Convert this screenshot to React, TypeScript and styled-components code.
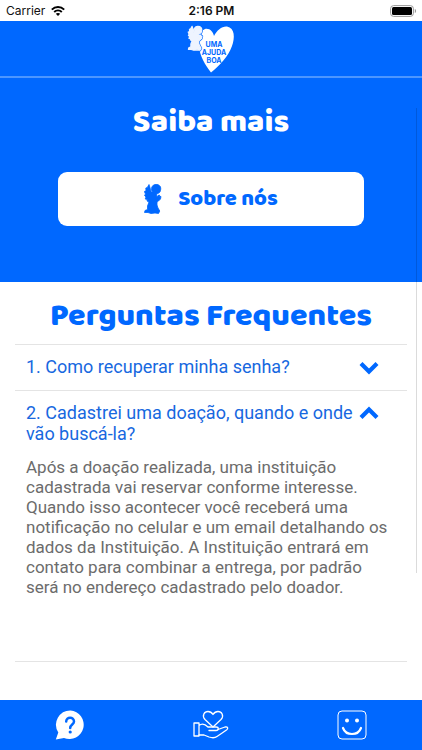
import React, { useState } from "react";
import styled, { createGlobalStyle } from "styled-components";

const BLUE = "#0068ff";

const GlobalStyle = createGlobalStyle`
  *, *::before, *::after { box-sizing: border-box; }
  body { margin: 0; background: #fff; font-family: Roboto, sans-serif; }
  button { font: inherit; color: inherit; background: none; border: 0; padding: 0; cursor: pointer; }
  h1, h2, h3, p { margin: 0; }
`;

const Screen = styled.div`
  display: flex;
  flex-direction: column;
  height: 100vh;
  background: #fff;
`;

const StatusBar = styled.div`
  display: grid;
  grid-template-columns: 1fr auto 1fr;
  align-items: center;
  flex: none;
  height: 21px;
  padding: 1px 5px 0 6px;
  font: 400 12px/20px Inter, sans-serif;
  color: #111;
`;

const Carrier = styled.span`
  display: flex;
  align-items: center;
  gap: 6px;
`;

const Clock = styled.span`
  font-weight: 600;
`;

const BatterySlot = styled.span`
  display: flex;
  justify-content: flex-end;
`;

const Header = styled.header`
  display: flex;
  justify-content: center;
  flex: none;
  height: 57px;
  padding-top: 4px;
  background: ${BLUE};
  border-bottom: 2px solid #4c96ff;
`;

const Body = styled.main`
  position: relative;
  flex: 1;
  min-height: 0;
`;

const ScrollThumb = styled.div`
  position: absolute;
  top: 30px;
  right: 5px;
  bottom: 127px;
  width: 1px;
  background: rgba(0, 0, 0, 0.14);
`;

const Hero = styled.section`
  display: flex;
  flex-direction: column;
  align-items: center;
  gap: 27px;
  padding: 23px 58px 56px;
  background: ${BLUE};
`;

const Title = styled.h1<{ $tone?: "light" | "blue" }>`
  font: 800 32px/44px "Baloo 2", Baloo, "Open Sans", sans-serif;
  color: ${(p) => (p.$tone === "light" ? "#fff" : BLUE)};
  text-align: center;
  white-space: nowrap;
`;

const AboutButton = styled.button`
  && {
    display: flex;
    align-items: center;
    justify-content: center;
    gap: 16px;
    width: 100%;
    height: 54px;
    border-radius: 9px;
    background: #fff;
    color: ${BLUE};
    font: 800 22px/28px "Baloo 2", Baloo, "Open Sans", sans-serif;
  }
`;

const Faq = styled.section`
  padding: 13px 15px 0;
`;

const FaqList = styled.div`
  margin-top: 5px;
  border-top: 1px solid #e4e4e4;
`;

const FaqItem = styled.article`
  border-bottom: 1px solid #e4e4e4;
`;

const Question = styled.button`
  && {
    display: flex;
    align-items: flex-start;
    justify-content: space-between;
    width: 100%;
    padding: 11px 28px 12px 11px;
    color: #1768e0;
    font-size: 18px;
    line-height: 21px;
    text-align: left;
  }

  svg {
    flex: none;
  }
`;

const Answer = styled.p`
  padding: 1px 12px 64px 11px;
  color: #6c6c6c;
  font-size: 17px;
  line-height: 20px;
`;

const TabBar = styled.nav`
  display: grid;
  grid-template-columns: repeat(3, 1fr);
  flex: none;
  height: 50px;
  background: ${BLUE};
`;

const Tab = styled.button`
  display: flex;
  align-items: center;
  justify-content: center;
`;

const ANGEL =
  "M5 .5 L5.800 3 L6.500 5.500 L7.200 8 L8.500 8 L7.500 6 L7.800 3 L9.500 1 L12 .3 L14.500 .8 L16.500 2.800 L16.800 5 L16 8 L14 9.500 L12.500 10 L13 13 L14 11.500 L15.500 11 L15.800 12.500 L17 12.500 L16.500 15 L14.500 17 L13 18 L13 21 L14 24 L15.800 27 L14.500 29.500 L11 29 L7 29.500 L4 28.500 L.5 28.500 L1 26.500 L3.500 25.500 L3.500 22 L5 18 L3 17 L3.300 15.500 L1.200 15 L2 13 L.5 11.500 L1.500 10 L.3 7.500 L2 6.800 L1.800 4 L3.300 3.500 Z";

const Angel = () => (
  <svg width="18" height="30" viewBox="0 0 18 30" aria-hidden="true">
    <path d={ANGEL} fill="currentColor" stroke="currentColor" strokeWidth=".8" strokeLinejoin="round" />
  </svg>
);

const Logo = () => (
  <svg width="50" height="50" viewBox="0 0 50 50" role="img" aria-label="Uma Ajuda Boa">
    <path
      d="M25 47.500 C19 40 14 31 13 22 C12 12 14 6 19 4 C24 3 27 7 28 11 C31 5 36 1 41 1.500 C49 3 49 13 46 21 C42 32 34 40 25 47.500 Z"
      fill="#fff"
    />
    <g transform="translate(2 1) scale(.82)">
      <path d={ANGEL} fill={BLUE} stroke={BLUE} strokeWidth="3" strokeLinejoin="round" />
      <path d={ANGEL} fill="#eef4ff" stroke="#eef4ff" strokeWidth="1.500" strokeLinejoin="round" />
    </g>
    <g fill={BLUE} fontFamily="Inter, sans-serif" fontWeight="700" fontSize="7" textAnchor="middle">
      <text x="28" y="22">UMA</text>
      <text x="28" y="30">AJUDA</text>
      <text x="28" y="38">BOA</text>
    </g>
  </svg>
);

const Wifi = () => (
  <svg width="14" height="10" viewBox="0 0 14 10" fill="none" stroke="#000" strokeWidth="2" aria-hidden="true">
    <path d="M.8 3.600 C4.300 .2 9.700 .2 13.200 3.600" />
    <path d="M3.200 6 C5.400 4 8.600 4 10.800 6" />
    <path d="M4.800 7.700 C6 6.600 8 6.600 9.200 7.700 L7 10 Z" fill="#000" stroke="none" />
  </svg>
);

const Battery = () => (
  <svg width="27" height="12" viewBox="0 0 27 12" aria-hidden="true">
    <rect x=".6" y=".6" width="22.800" height="10.800" rx="3" fill="#fff" stroke="#999" />
    <rect x="2" y="2" width="20" height="8" rx="1.500" fill="#000" />
    <path d="M24.800 4 C26.500 4.500 26.500 7.500 24.800 8 Z" fill="#999" />
  </svg>
);

const Chevron = ({ up }: { up: boolean }) => (
  <svg width="20" height="22" viewBox="0 0 20 22" aria-hidden="true">
    <path
      d={up ? "M2 15.500 L10 7.500 L18 15.500" : "M2 7.500 L10 15.500 L18 7.500"}
      fill="none"
      stroke={BLUE}
      strokeWidth="4.200"
    />
  </svg>
);

const HelpIcon = () => (
  <svg width="30" height="30" viewBox="0 0 30 30" aria-hidden="true">
    <path d="M15.500 .5 A14.300 14.300 0 1 1 9 28 L.8 29.500 L3.300 22.500 A14.300 14.300 0 0 1 15.500 .5 Z" fill="#fff" />
    <path
      d="M11.200 11.500 C11.200 6.500 19 6.500 19 11.500 C19 14.500 15.200 14.500 15.200 18"
      fill="none"
      stroke={BLUE}
      strokeWidth="2.500"
      strokeLinecap="round"
    />
    <circle cx="15.200" cy="22" r="1.600" fill={BLUE} />
  </svg>
);

const DonateIcon = () => (
  <svg
    width="36"
    height="30"
    viewBox="0 0 36 30"
    fill="none"
    stroke="#fff"
    strokeWidth="1.300"
    strokeLinejoin="round"
    strokeLinecap="round"
    aria-hidden="true"
  >
    <path d="M20 17 L12 9.500 C8.500 5.500 11.500 1.500 15 1.500 C17.500 1.500 19 3 20 4.500 C21 3 22.500 1.500 25 1.500 C28.500 1.500 31.500 5.500 28 9.500 Z" />
    <path d="M1 13 H6 V26 H1 Z M6 15.500 C9 13 12 14 15 17 H23 C26 17 26 20.500 23 20.500 H16" />
    <path d="M25 19.500 L32 17 C35 16.500 35.500 18.500 33.500 20 L24 26.500 C22 28 19 28 16 27 L11 25 H6" />
  </svg>
);

const SmileIcon = () => (
  <svg width="30" height="30" viewBox="0 0 30 30" fill="none" stroke="#fff" aria-hidden="true">
    <rect x="1" y="1" width="28" height="28" rx="4" />
    <circle cx="10" cy="10.500" r="2" fill="#fff" stroke="none" />
    <circle cx="20" cy="10.500" r="2" fill="#fff" stroke="none" />
    <path d="M6 18 C9 26 21 26 24 18" strokeWidth="2.200" strokeLinecap="round" />
  </svg>
);

const QUESTIONS = [
  { title: "1. Como recuperar minha senha?", answer: "" },
  {
    title: "2. Cadastrei uma doação, quando e onde vão buscá-la?",
    answer:
      "Após a doação realizada, uma instituição cadastrada vai reservar conforme interesse. Quando isso acontecer você receberá uma notificação no celular e um email detalhando os dados da Instituição. A Instituição entrará em contato para combinar a entrega, por padrão será no endereço cadastrado pelo doador.",
  },
];

export default function App() {
  const [open, setOpen] = useState(1);
  return (
    <Screen>
      <GlobalStyle />
      <StatusBar>
        <Carrier>
          Carrier <Wifi />
        </Carrier>
        <Clock>2:16 PM</Clock>
        <BatterySlot>
          <Battery />
        </BatterySlot>
      </StatusBar>
      <Header>
        <Logo />
      </Header>
      <Body>
        <Hero>
          <Title $tone="light">Saiba mais</Title>
          <AboutButton type="button">
            <Angel />
            Sobre nós
          </AboutButton>
        </Hero>
        <Faq>
          <Title as="h2">Perguntas Frequentes</Title>
          <FaqList>
            {QUESTIONS.map((q, i) => (
              <FaqItem key={q.title}>
                <Question type="button" aria-expanded={open === i} onClick={() => setOpen(open === i ? -1 : i)}>
                  <span>{q.title}</span>
                  <Chevron up={open === i} />
                </Question>
                {open === i && q.answer && <Answer>{q.answer}</Answer>}
              </FaqItem>
            ))}
          </FaqList>
        </Faq>
        <ScrollThumb />
      </Body>
      <TabBar>
        <Tab type="button" aria-label="Ajuda">
          <HelpIcon />
        </Tab>
        <Tab type="button" aria-label="Doações">
          <DonateIcon />
        </Tab>
        <Tab type="button" aria-label="Perfil">
          <SmileIcon />
        </Tab>
      </TabBar>
    </Screen>
  );
}
